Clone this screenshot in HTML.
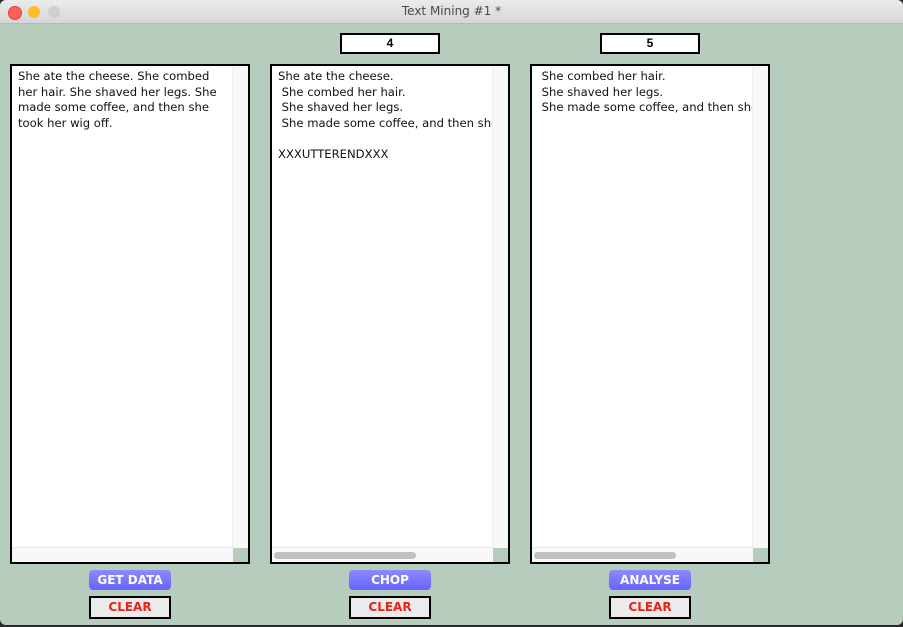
<!DOCTYPE html>
<html><head><style>
body{margin:0;width:903px;height:627px;background:#2a2a2a;position:relative;overflow:hidden;font-family:"Liberation Sans",sans-serif}
.win{position:absolute;left:0;top:0;width:903px;height:625px;background:#b6cdbd;border-radius:6px;overflow:hidden}
.tb{position:absolute;left:0;top:0;width:903px;height:23px;background:linear-gradient(#ebebeb,#d6d6d6);border-bottom:1px solid #b8b8b8;text-align:center;font-family:"DejaVu Sans",sans-serif;font-size:12px;line-height:23px;color:#4a4a4a}
.dot{position:absolute;top:6px;width:12px;height:12px;border-radius:50%}
.panel{position:absolute;top:64px;width:236px;height:496px;border:2px solid #000;background:#fff}
.vs{position:absolute;right:0;top:0;width:15px;height:482px;background:#f8f8f8;border-left:1px solid #eee}
.hs{position:absolute;left:0;bottom:0;width:221px;height:14px;background:#f8f8f8;border-top:1px solid #e6e6e6}
.corner{position:absolute;right:0;bottom:0;width:15px;height:14px;background:#b6cdbd}
.thumb{position:absolute;left:2px;top:4px;height:7px;width:142px;background:#c0c0c0;border-radius:4px}
.txt{position:absolute;left:6px;top:3px;width:215px;font-family:"DejaVu Sans",sans-serif;font-size:11.6px;line-height:15.5px;color:#111;white-space:pre;overflow:hidden}
.num{position:absolute;top:33px;width:96px;height:17px;border:2px solid #000;background:#fff;text-align:center;font-weight:bold;font-size:12px;line-height:17px}
.btn{position:absolute;top:570px;width:82px;height:20px;border-radius:4px;background:linear-gradient(#8a8cff,#6662ff);color:#fff;font-weight:bold;font-size:12px;text-align:center;line-height:20px;font-family:"DejaVu Sans",sans-serif}
.clr{position:absolute;top:596px;width:78px;height:19px;border:2px solid #000;background:#ebebeb;color:#e8221a;font-weight:bold;font-size:12px;text-align:center;line-height:19px;font-family:"DejaVu Sans",sans-serif}
</style></head><body>
<div class="win">
<div class="tb">Text Mining #1 *
<div class="dot" style="left:8px;background:#fe5f57;border:0.5px solid #e0443e"></div>
<div class="dot" style="left:28px;background:#febc2e"></div>
<div class="dot" style="left:48px;background:#cfcfcf"></div>
</div>
<div class="num" style="left:340px">4</div>
<div class="num" style="left:600px">5</div>

<div class="panel" style="left:10px"><div class="txt" style="white-space:normal;width:208px">She ate the cheese. She combed her hair. She shaved her legs. She made some coffee, and then she took her wig off.</div><div class="vs"></div><div class="hs"></div><div class="corner"></div></div>
<div class="panel" style="left:270px"><div class="txt">She ate the cheese.
 She combed her hair.
 She shaved her legs.
 She made some coffee, and then she took

XXXUTTERENDXXX</div><div class="vs"></div><div class="hs"><div class="thumb"></div></div><div class="corner"></div></div>
<div class="panel" style="left:530px"><div class="txt"> She combed her hair.
 She shaved her legs.
 She made some coffee, and then she took</div><div class="vs"></div><div class="hs"><div class="thumb"></div></div><div class="corner"></div></div>

<div class="btn" style="left:89px">GET DATA</div>
<div class="btn" style="left:349px">CHOP</div>
<div class="btn" style="left:609px">ANALYSE</div>
<div class="clr" style="left:89px">CLEAR</div>
<div class="clr" style="left:349px">CLEAR</div>
<div class="clr" style="left:609px">CLEAR</div>
</div>
</body></html>
